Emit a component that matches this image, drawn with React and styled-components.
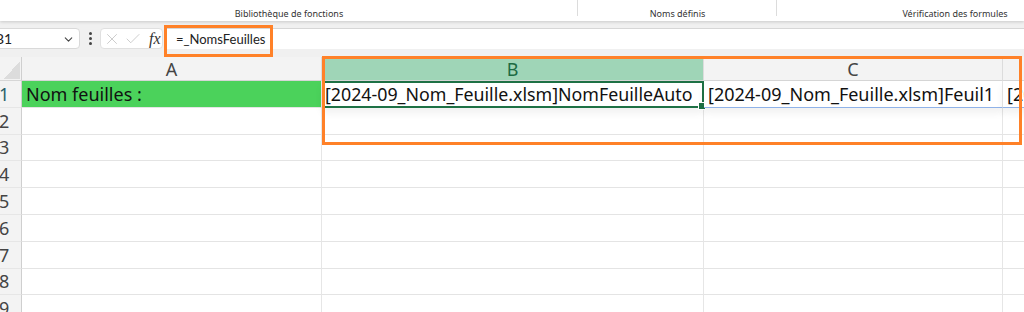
import React from 'react'
import styled, { createGlobalStyle } from 'styled-components'
import { ChevronDown, X, Check } from 'lucide-react'

const GlobalStyle = createGlobalStyle`
  html, body { margin: 0; padding: 0; overflow: hidden; background: #f0f0f0; }
  body { font-family: "Noto Sans", "Open Sans", sans-serif; }
`

const Page = styled.div`
  width: 1024px;
  height: 312px;
  overflow: hidden;
  background: #f0f0f0;
`

// Ribbon (group labels only)
const Ribbon = styled.div`
  position: relative;
  z-index: 2;
  display: flex;
  height: 21px;
  background: #fff;
  box-shadow: 0 1px 3px rgba(0, 0, 0, 0.16);
`

const Group = styled.div`
  flex: 0 0 ${p => p.w}px;
  box-sizing: border-box;
  display: flex;
  align-items: center;
  justify-content: center;
  padding-top: 6px;
  font-size: 9px;
  color: #333;
  white-space: nowrap;
  background: ${p => (p.last ? 'none' : 'linear-gradient(#dcdcdc, #dcdcdc) right top / 1px 16px no-repeat')};
`

// Formula bar
const FormulaRow = styled.div`
  display: flex;
  align-items: flex-start;
  height: 36px;
  padding-top: 7px;
  box-sizing: border-box;
`

const NameBox = styled.div`
  flex: 0 0 88px;
  margin-left: -8px;
  height: 21px;
  box-sizing: border-box;
  display: flex;
  align-items: center;
  justify-content: space-between;
  padding: 0 4px 0 2px;
  background: #fff;
  border: 1px solid #d9d9d9;
  border-radius: 4px;
  font-family: Lato, "Noto Sans", sans-serif;
  font-size: 14px;
  color: #222;
  svg { color: #444; margin-top: 1px; }
`

const Dots = styled.div`
  flex: 0 0 20px;
  height: 21px;
  display: flex;
  flex-direction: column;
  align-items: center;
  justify-content: center;
  gap: 2px;
  span {
    width: 3px;
    height: 3px;
    border-radius: 50%;
    background: #444;
  }
`

const Buttons = styled.div`
  flex: 0 0 63px;
  height: 21px;
  box-sizing: border-box;
  display: flex;
  align-items: center;
  gap: 3px;
  padding-left: 2px;
  background: #fff;
  border: 1px solid #e0e0e0;
  border-radius: 4px;
  margin-right: 4px;
  svg { color: #c2c2c2; }
`

const Fx = styled.span`
  font-family: "Liberation Serif", "DejaVu Serif", serif;
  font-style: italic;
  font-size: 16px;
  color: #333;
  margin-left: 4px;
  line-height: 1;
`

const Input = styled.div`
  position: relative;
  flex: 1;
  height: 21px;
  box-sizing: border-box;
  display: flex;
  align-items: center;
  padding-left: 9px;
  background: #fff;
  border-top: 1px solid #d6d6d6;
  font-family: Lato, "Noto Sans", sans-serif;
  font-size: 13px;
  color: #222;
`

const Callout = styled.div`
  position: absolute;
  border: 3px solid #ff8128;
  box-sizing: border-box;
  pointer-events: none;
`

const FormulaCallout = styled(Callout)`
  left: -3px;
  top: -4px;
  width: 109px;
  height: 32px;
`

// Sheet grid
const SheetWrap = styled.div`
  position: relative;
`

const Sheet = styled.div`
  display: grid;
  grid-template-columns: 22px 300px 382px 299px 120px;
  grid-template-rows: 24px;
  grid-auto-rows: 26.8px;
  background: #fff;
`

const Corner = styled.div`
  background: linear-gradient(to bottom right, #f3f3f3 50%, #dcdcdc 50%) 4px 4px / 16px 18px no-repeat, #f3f3f3;
  border-right: 1px solid #cfcfcf;
  border-bottom: 1px solid #d6d6d6;
`

const ColHead = styled.div`
  box-sizing: border-box;
  display: flex;
  align-items: center;
  justify-content: center;
  font-size: 18px;
  color: ${p => (p.active ? '#1d6b43' : '#444')};
  background: ${p => (p.active ? '#9fd5b7' : '#f3f3f3')};
  border-right: 1px solid #dcdcdc;
  border-bottom: 1px solid #d6d6d6;
`

const RowHead = styled.div`
  box-sizing: border-box;
  display: flex;
  align-items: center;
  text-indent: -1px;
  font-size: 18px;
  color: ${p => (p.active ? '#2a5f6a' : '#444')};
  background: #f3f3f3;
  border-right: 1px solid #cfcfcf;
  border-bottom: 1px solid #e6e6e6;
  overflow: hidden;
`

const Cell = styled.div`
  position: relative;
  box-sizing: border-box;
  display: flex;
  align-items: center;
  padding-left: 4px;
  font-size: 18px;
  color: #111;
  white-space: nowrap;
  overflow: hidden;
  background: ${p => p.fill || '#fff'};
  border-right: 1px solid #e6e6e6;
  border-bottom: 1px solid #e4e4e4;
  ${p => p.spill && `
    z-index: 1;
    border-bottom: 1px solid #8fb2e8;
    box-shadow: 0 5px 8px rgba(0, 0, 0, 0.06);
    overflow: visible;
  `}
`

const Selected = styled(Cell)`
  z-index: 1;
  overflow: visible;
  padding-left: 1px;
  font-size: 17.8px;
  border: 2px solid #1e7145;
  box-shadow: 0 5px 8px rgba(0, 0, 0, 0.06);
`

const Handle = styled.span`
  position: absolute;
  right: -4px;
  bottom: -4px;
  width: 6px;
  height: 6px;
  background: #1e7145;
  border: 1px solid #fff;
`

const Clip = styled.span`
  overflow: hidden;
`

const SheetCallout = styled(Callout)`
  left: 322px;
  top: -1px;
  width: 700px;
  height: 89px;
  z-index: 3;
`

const cols = ['A', 'B', 'C', 'D']

const App = () => (
  <Page>
    <GlobalStyle />
    <Ribbon>
      <Group w={578}>Bibliothèque de fonctions</Group>
      <Group w={199}>Noms définis</Group>
      <Group w={356} last>Vérification des formules</Group>
    </Ribbon>

    <FormulaRow>
      <NameBox>
        <span>B1</span>
        <ChevronDown size={13} strokeWidth={2} />
      </NameBox>
      <Dots><span /><span /><span /></Dots>
      <Buttons>
        <X size={18} strokeWidth={1.1} />
        <Check size={18} strokeWidth={1.1} />
        <Fx>fx</Fx>
      </Buttons>
      <Input>
        =_NomsFeuilles
        <FormulaCallout />
      </Input>
    </FormulaRow>

    <SheetWrap>
      <Sheet>
        <Corner />
        {cols.map(c => (
          <ColHead key={c} active={c === 'B'}>{c === 'D' ? '' : c}</ColHead>
        ))}

        <RowHead active>1</RowHead>
        <Cell fill="#4bd25b">Nom feuilles :</Cell>
        <Selected>
          <Clip>[2024-09_Nom_Feuille.xlsm]NomFeuilleAuto</Clip>
          <Handle />
        </Selected>
        <Cell spill>[2024-09_Nom_Feuille.xlsm]Feuil1</Cell>
        <Cell spill>[2024-09_Nom_Feuille.xlsm]Feuil2</Cell>

        {[2, 3, 4, 5, 6, 7, 8, 9].map(r => (
          <React.Fragment key={r}>
            <RowHead>{r}</RowHead>
            {cols.map(c => <Cell key={c} />)}
          </React.Fragment>
        ))}
      </Sheet>
      <SheetCallout />
    </SheetWrap>
  </Page>
)

export default App
